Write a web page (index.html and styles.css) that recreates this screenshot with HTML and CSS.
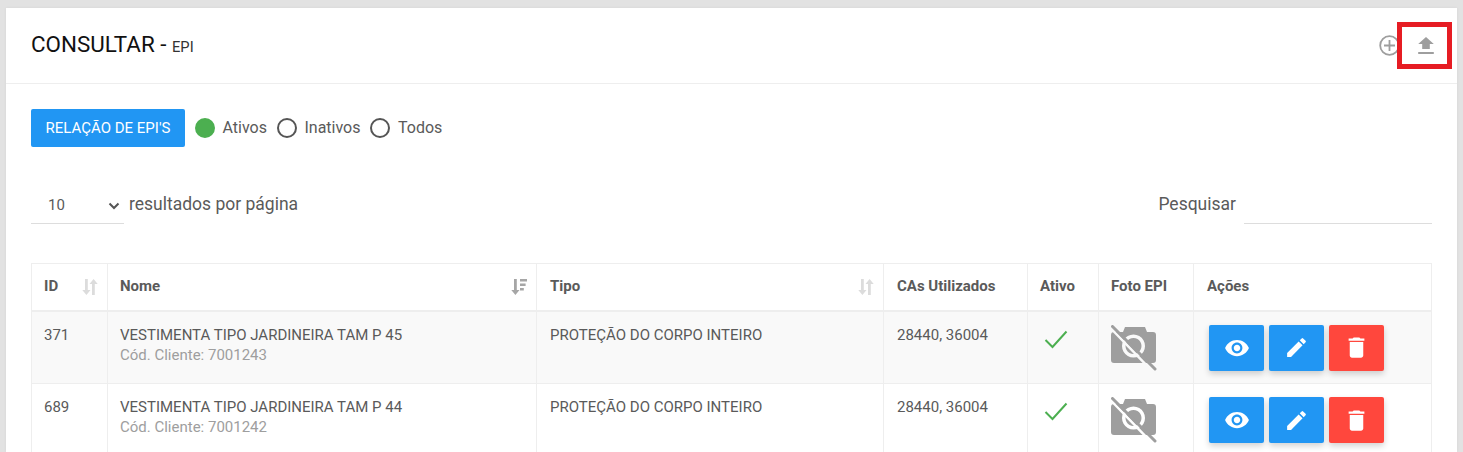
FILE: index.html
```html
<!DOCTYPE html>
<html lang="pt-BR">
<head>
<meta charset="utf-8">
<title>Consultar EPI</title>
<link rel="stylesheet" href="styles.css">
</head>
<body>
<svg class="defs" width="0" height="0" aria-hidden="true">
  <defs>
    <symbol id="no-photo" viewBox="0 0 46 46">
      <path fill="#9e9e9e" fill-rule="evenodd" d="M3 7h9l2-5h20l2 5h6q3 0 3 3v25q0 3-3 3H3q-3 0-3-3V10q0-3 3-3zM22.500 9.500a11.500 11.500 0 1 0 .01 0zM22.500 13a8 8 0 1 1-.01 0z"/>
      <path fill="none" stroke="#f9f9f9" stroke-width="2.500" d="M-1 2.500 42 47"/>
      <path fill="none" stroke="#9e9e9e" stroke-width="3" stroke-linecap="round" d="M1.500 1.500 44 44"/>
    </symbol>
    <symbol id="no-photo-w" viewBox="0 0 46 46">
      <path fill="#9e9e9e" fill-rule="evenodd" d="M3 7h9l2-5h20l2 5h6q3 0 3 3v25q0 3-3 3H3q-3 0-3-3V10q0-3 3-3zM22.500 9.500a11.500 11.500 0 1 0 .01 0zM22.500 13a8 8 0 1 1-.01 0z"/>
      <path fill="none" stroke="#fff" stroke-width="2.500" d="M-1 2.500 42 47"/>
      <path fill="none" stroke="#9e9e9e" stroke-width="3" stroke-linecap="round" d="M1.500 1.500 44 44"/>
    </symbol>
    <symbol id="eye" viewBox="0 0 24 24"><path fill="#fff" d="M12 4.500C7 4.500 2.730 7.610 1 12c1.730 4.390 6 7.500 11 7.500s9.270-3.110 11-7.500c-1.730-4.390-6-7.500-11-7.500zM12 17c-2.760 0-5-2.240-5-5s2.240-5 5-5 5 2.240 5 5-2.240 5-5 5zm0-8c-1.660 0-3 1.340-3 3s1.340 3 3 3 3-1.340 3-3-1.340-3-3-3z"/></symbol>
    <symbol id="pencil" viewBox="0 0 24 24"><path fill="#fff" d="M3 17.250V21h3.750L17.810 9.940l-3.750-3.750L3 17.250zM20.710 7.040a1 1 0 0 0 0-1.410l-2.340-2.340a1 1 0 0 0-1.410 0l-1.830 1.830 3.750 3.750 1.830-1.830z"/></symbol>
    <symbol id="trash" viewBox="0 0 24 24"><path fill="#fff" d="M6 19c0 1.100.9 2 2 2h8c1.100 0 2-.9 2-2V7H6v12zM19 4h-3.500l-1-1h-5l-1 1H5v2h14V4z"/></symbol>
    <symbol id="check" viewBox="0 0 24 24"><path fill="none" stroke="#4caf50" stroke-width="2" d="M1.500 13 8.500 20 22.500 4.500"/></symbol>
    <symbol id="sort" viewBox="0 0 16 16"><path fill="#dcdcdc" d="M3 0h2.800v11H8.500L4.400 16 .3 11H3zM10 16V5H7.500L11.600 0 15.700 5H12.800v11z"/></symbol>
    <symbol id="sort-active" viewBox="0 0 16 16"><path fill="#a6a6a6" d="M3 0h2.800v11H8.500L4.400 16 .3 11H3zM9 0h7v2.600H9zM9 4.500h5.600v2.600H9zM9 9h3.800v2.600H9z"/></symbol>
  </defs>
</svg>
<main class="card">
  <header class="card-head">
    <h1 class="title">CONSULTAR - <small class="title-sub">EPI</small></h1>
    <div class="head-tools">
      <svg class="tool-add" viewBox="0 0 21 21" aria-hidden="true"><circle cx="10.500" cy="10.500" r="9.300" fill="none" stroke="#9e9e9e" stroke-width="1.800"/><path stroke="#9e9e9e" stroke-width="1.800" d="M10.500 5v11M5 10.500h11"/></svg>
      <div class="tool-upload"><svg class="tool-upload-icon" viewBox="0 0 16 17" aria-hidden="true"><path fill="#9e9e9e" d="M4.200 12V7H.2L8 0l7.800 7h-4v5zM.2 15h15.600v2H.2z"/></svg></div>
    </div>
  </header>
  <section class="card-body">
    <div class="filters">
      <button class="btn-report" type="button">RELAÇÃO DE EPI'S</button>
      <span class="radio radio-on"></span><span class="radio-label">Ativos</span>
      <span class="radio"></span><span class="radio-label">Inativos</span>
      <span class="radio"></span><span class="radio-label">Todos</span>
    </div>
    <div class="controls">
      <div class="length">
        <div class="select"><span>10</span><svg class="chev" viewBox="0 0 12 8" aria-hidden="true"><path fill="none" stroke="#555" stroke-width="2" d="M1.500 1.500 6 6l4.500-4.500"/></svg></div>
        <span class="length-label">resultados por página</span>
      </div>
      <div class="search">
        <span class="search-label">Pesquisar</span>
        <div class="search-input"></div>
      </div>
    </div>
    <table class="grid">
      <colgroup>
        <col class="c-id"><col class="c-name"><col class="c-type"><col class="c-cas"><col class="c-act"><col class="c-foto"><col class="c-acoes">
      </colgroup>
      <thead>
        <tr>
          <th><div class="th-sort">ID<svg class="sort"><use href="#sort"/></svg></div></th>
          <th><div class="th-sort">Nome<svg class="sort"><use href="#sort-active"/></svg></div></th>
          <th><div class="th-sort">Tipo<svg class="sort"><use href="#sort"/></svg></div></th>
          <th>CAs Utilizados</th>
          <th>Ativo</th>
          <th>Foto EPI</th>
          <th>Ações</th>
        </tr>
      </thead>
      <tbody>
        <tr class="odd">
          <td>371</td>
          <td>VESTIMENTA TIPO JARDINEIRA TAM P 45<div class="code">Cód. Cliente: 7001243</div></td>
          <td>PROTEÇÃO DO CORPO INTEIRO</td>
          <td>28440, 36004</td>
          <td><svg class="check"><use href="#check"/></svg></td>
          <td><svg class="foto"><use href="#no-photo"/></svg></td>
          <td><div class="actions">
            <button class="act act-blue" type="button"><svg class="eye"><use href="#eye"/></svg></button>
            <button class="act act-blue" type="button"><svg class="pen"><use href="#pencil"/></svg></button>
            <button class="act act-red" type="button"><svg class="bin"><use href="#trash"/></svg></button>
          </div></td>
        </tr>
        <tr>
          <td>689</td>
          <td>VESTIMENTA TIPO JARDINEIRA TAM P 44<div class="code">Cód. Cliente: 7001242</div></td>
          <td>PROTEÇÃO DO CORPO INTEIRO</td>
          <td>28440, 36004</td>
          <td><svg class="check"><use href="#check"/></svg></td>
          <td><svg class="foto"><use href="#no-photo-w"/></svg></td>
          <td><div class="actions">
            <button class="act act-blue" type="button"><svg class="eye"><use href="#eye"/></svg></button>
            <button class="act act-blue" type="button"><svg class="pen"><use href="#pencil"/></svg></button>
            <button class="act act-red" type="button"><svg class="bin"><use href="#trash"/></svg></button>
          </div></td>
        </tr>
      </tbody>
    </table>
  </section>
</main>
</body>
</html>
```
FILE: styles.css
```css
* { box-sizing: border-box; }
html, body { height: 452px; overflow: hidden; }
body {
  margin: 0;
  padding: 8px 6px 0;
  background: #e2e2e2;
  font-family: Roboto, "Liberation Sans", sans-serif;
  color: #5a5a5a;
}
.defs { position: absolute; }
.card { background: #fff; height: 444px; overflow: hidden; box-shadow: 0 0 3px rgba(0,0,0,.06); }
.card-head {
  height: 76px;
  border-bottom: 1px solid #eee;
  display: flex;
  align-items: center;
  justify-content: space-between;
  padding: 0 5px 3px 25px;
}
.title { margin: 0; font-size: 22.400px; font-weight: 400; color: #111; }
.title-sub { font-size: 14.700px; color: #333; }
.head-tools { display: flex; align-items: center; margin-top: 3px; }
.tool-add { width: 21px; height: 21px; margin-right: -3px; }
.tool-upload {
  width: 55px; height: 47px;
  border: 5px solid #e61c23;
  display: flex; align-items: center; justify-content: center;
  position: relative;
  padding-left: 2px;
}
.tool-upload-icon { width: 16px; height: 17px; }
.card-body { padding: 25px 25px 0; }
.filters { display: flex; align-items: center; height: 38px; font-size: 16px; }
.btn-report {
  width: 154px; height: 38px;
  border: 0; border-radius: 2px;
  background: #2196f3; color: #fff;
  font: 400 15px Roboto, sans-serif;
  margin-right: 10px;
  padding: 0;
}
.radio { width: 20px; height: 20px; border: 2px solid #555; border-radius: 50%; margin-right: 7.500px; }
.radio-on { background: #4caf50; border-color: #4caf50; }
.radio-label { margin-right: 10px; padding-bottom: 2px; }
.controls { display: flex; justify-content: space-between; align-items: flex-start; margin-top: 38px; }
.length { display: flex; align-items: flex-start; font-size: 17.500px; }
.select {
  width: 93px; height: 39px;
  border-bottom: 1px solid #ddd;
  display: flex; align-items: center; justify-content: space-between;
  font-size: 15px;
  padding: 2px 4px 0 17px;
}
.chev { width: 12px; height: 8px; margin-top: 2px; }
.length-label { margin-left: 5px; line-height: 38px; }
.search { display: flex; font-size: 17.500px; line-height: 38px; }
.search-input { width: 188px; height: 39px; margin-left: 8px; border-bottom: 1px solid #ddd; }
.grid {
  table-layout: fixed;
  width: 1400px;
  border-collapse: collapse;
  margin-top: 39px;
  font-size: 15px;
}
.c-id { width: 76px; } .c-name { width: 429px; } .c-type { width: 347px; }
.c-cas { width: 144px; } .c-act { width: 71px; } .c-foto { width: 95px; } .c-acoes { width: 238px; }
.grid th, .grid td { border: 1px solid #eee; padding: 0 12px; vertical-align: top; text-align: left; }
.grid th:nth-child(n+3):nth-child(-n+4), .grid td:nth-child(n+3):nth-child(-n+4), .grid th:nth-child(7) { padding-left: 13px; }
.grid th { height: 47px; border-bottom-width: 2px; font-weight: 700; vertical-align: middle; padding-bottom: 1px; }
.grid td { height: 73px; padding-top: 13px; line-height: 20px; }
.odd td { background: #f9f9f9; }
.th-sort { display: flex; justify-content: space-between; align-items: center; }
.sort { width: 16px; height: 16px; margin-right: -3px; margin-top: 1px; }
.code { color: #9e9e9e; }
.check { width: 24px; height: 24px; display: block; margin: 2px 0 0 4px; }
.foto { width: 46px; height: 46px; display: block; }
.grid td:nth-child(7) { padding-left: 15px; }
.actions { display: flex; gap: 5px; }
.act {
  width: 55px; height: 46px;
  border: 0; border-radius: 2px; padding: 0;
  display: flex; align-items: center; justify-content: center;
  box-shadow: 0 3px 6px rgba(0,0,0,.18);
}
.act .eye { width: 26px; height: 26px; }
.act .pen { width: 25px; height: 25px; }
.act .bin { width: 27px; height: 27px; }
.act-blue { background: #2196f3; }
.act-red { background: #ff473d; }
```
